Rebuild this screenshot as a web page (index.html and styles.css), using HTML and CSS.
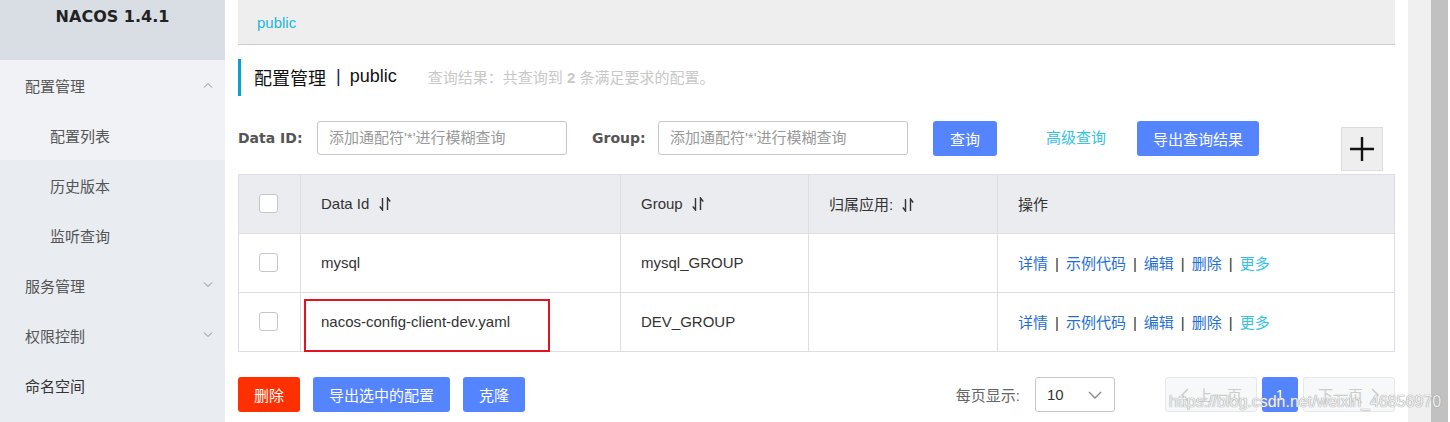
FILE: index.html
```html
<!DOCTYPE html>
<html lang="zh-CN">
<head>
<meta charset="utf-8">
<title>NACOS</title>
<link rel="stylesheet" href="styles.css">
</head>
<body>
<div class="app">
  <aside class="sidebar">
    <div class="brand">NACOS 1.4.1</div>
    <div class="menu">
      <div class="menu-item open">配置管理
        <svg class="chev" width="10" height="6" viewBox="0 0 10 6"><path d="M1 5.5 L5 1.5 L9 5.5" fill="none" stroke="#888" stroke-width="1"/></svg>
      </div>
      <div class="menu-sub active">配置列表</div>
      <div class="menu-sub">历史版本</div>
      <div class="menu-sub">监听查询</div>
      <div class="menu-item">服务管理
        <svg class="chev" width="10" height="6" viewBox="0 0 10 6"><path d="M1 0.5 L5 4.5 L9 0.5" fill="none" stroke="#888" stroke-width="1"/></svg>
      </div>
      <div class="menu-item">权限控制
        <svg class="chev" width="10" height="6" viewBox="0 0 10 6"><path d="M1 0.5 L5 4.5 L9 0.5" fill="none" stroke="#888" stroke-width="1"/></svg>
      </div>
      <div class="menu-item dark">命名空间</div>
    </div>
  </aside>

  <main class="main">
    <div class="ns-bar"><span class="ns-link">public</span></div>

    <div class="page-title">
      <span class="title-text">配置管理</span><span class="title-sep">|</span><span class="title-text">public</span>
      <span class="title-info">查询结果：共查询到 <b>2</b> 条满足要求的配置。</span>
    </div>

    <div class="search-row">
      <label class="field-label">Data ID:</label>
      <div class="input">添加通配符'*'进行模糊查询</div>
      <label class="field-label group-label">Group:</label>
      <div class="input">添加通配符'*'进行模糊查询</div>
      <button class="btn btn-primary btn-query">查询</button>
      <span class="adv-link">高级查询</span>
      <button class="btn btn-primary">导出查询结果</button>
      <div class="plus-box">
        <svg width="26" height="26" viewBox="0 0 26 26"><path d="M13 1 V25 M1 13 H25" stroke="#111" stroke-width="2.4"/></svg>
      </div>
    </div>

    <table class="grid">
      <colgroup>
        <col class="c-check"><col class="c-id"><col class="c-group"><col class="c-app"><col class="c-op">
      </colgroup>
      <thead>
        <tr>
          <th><span class="checkbox"></span></th>
          <th>Data Id <svg class="sort" width="12" height="14" viewBox="0 0 12 14"><path d="M3.5 1 V13 L0.8 9.5 M8.5 13 V1 L11.2 4.5" fill="none" stroke="#333" stroke-width="1.4"/></svg></th>
          <th>Group <svg class="sort" width="12" height="14" viewBox="0 0 12 14"><path d="M3.5 1 V13 L0.8 9.5 M8.5 13 V1 L11.2 4.5" fill="none" stroke="#333" stroke-width="1.4"/></svg></th>
          <th>归属应用: <svg class="sort" width="12" height="14" viewBox="0 0 12 14"><path d="M3.5 1 V13 L0.8 9.5 M8.5 13 V1 L11.2 4.5" fill="none" stroke="#333" stroke-width="1.4"/></svg></th>
          <th>操作</th>
        </tr>
      </thead>
      <tbody>
        <tr>
          <td><span class="checkbox"></span></td>
          <td>mysql</td>
          <td>mysql_GROUP</td>
          <td></td>
          <td class="ops"><a>详情</a><i>|</i><a>示例代码</a><i>|</i><a>编辑</a><i>|</i><a>删除</a><i>|</i><a class="more">更多</a></td>
        </tr>
        <tr>
          <td><span class="checkbox"></span></td>
          <td class="marked">nacos-config-client-dev.yaml<span class="mark-box"></span></td>
          <td>DEV_GROUP</td>
          <td></td>
          <td class="ops"><a>详情</a><i>|</i><a>示例代码</a><i>|</i><a>编辑</a><i>|</i><a>删除</a><i>|</i><a class="more">更多</a></td>
        </tr>
      </tbody>
    </table>

    <div class="footer-row">
      <button class="btn btn-danger">删除</button>
      <button class="btn btn-primary">导出选中的配置</button>
      <button class="btn btn-primary">克隆</button>
      <span class="spacer"></span>
      <span class="page-size-label">每页显示:</span>
      <div class="select">10
        <svg width="14" height="8" viewBox="0 0 14 8"><path d="M1 1 L7 7 L13 1" fill="none" stroke="#888" stroke-width="1.3"/></svg>
      </div>
      <div class="pager">
        <span class="page-btn disabled"><svg width="9" height="14" viewBox="0 0 9 14"><path d="M8 1 L2 7 L8 13" fill="none" stroke="#ccc" stroke-width="1.5"/></svg>上一页</span>
        <span class="page-num">1</span>
        <span class="page-btn disabled">下一页<svg width="9" height="14" viewBox="0 0 9 14"><path d="M1 1 L7 7 L1 13" fill="none" stroke="#ccc" stroke-width="1.5"/></svg></span>
      </div>
    </div>
  </main>

  <div class="scrollbar"><div class="track"></div><div class="thumb"></div></div>
</div>
<div class="watermark">https://blog.csdn.net/weixin_46856970</div>
</body>
</html>
```
FILE: styles.css
```css
* { box-sizing: border-box; }
html, body { margin: 0; padding: 0; }
body {
  width: 1450px;
  height: 422px;
  overflow: hidden;
  font-family: "Liberation Sans", "Noto Sans CJK SC", sans-serif;
  font-size: 15px;
  color: #333;
  background: #fff;
  position: relative;
}
.app { display: flex; height: 422px; }

/* sidebar */
.sidebar { width: 225px; flex: none; background: #e9ecf1; }
.brand {
  height: 60px;
  background: #d9dde4;
  font-family: "DejaVu Sans", sans-serif;
  font-weight: bold;
  font-size: 16px;
  color: #222;
  text-align: center;
  line-height: 34px;
}
.menu-item, .menu-sub {
  height: 50px;
  display: flex;
  align-items: center;
  padding-left: 25px;
  padding-right: 12px;
  color: #555;
  font-size: 15px;
}
.menu-sub { padding-left: 50px; }
.menu-item.open, .menu-sub.active { background: #f0f2f5; }
.menu-item .chev { margin-left: auto; }
.menu-item.dark { color: #333; }

/* main */
.main { width: 1183px; flex: none; padding: 0 13px; }
.ns-bar {
  height: 45px;
  background: #eee;
  border-bottom: 1px solid #ccc;
  padding-left: 19px;
  display: flex;
  align-items: center;
}
.ns-link { color: #1fb6e0; font-size: 15px; }

.page-title {
  margin-top: 14px;
  height: 37px;
  border-left: 3px solid #09a0d6;
  padding-left: 13px;
  padding-bottom: 2px;
  display: flex;
  align-items: center;
}
.title-text { font-size: 18px; color: #111; }
.title-sep { font-size: 18px; color: #0f1f6b; margin: 0 9px 0 10px; }
.title-info { margin-left: 31px; font-size: 15px; color: #c8c8c8; }
.title-info b { font-weight: bold; }

.search-row {
  margin-top: 25px;
  display: flex;
  align-items: flex-start;
}
.field-label {
  font-family: "DejaVu Sans", sans-serif;
  font-weight: bold;
  font-size: 14px;
  color: #555;
  line-height: 34px;
  width: 79px;
}
.group-label { width: 66px; margin-left: 25px; }
.input {
  width: 250px;
  height: 34px;
  border: 1px solid #c4c6cf;
  border-radius: 3px;
  padding-left: 11px;
  line-height: 32px;
  color: #999;
  font-size: 15px;
}
.btn {
  height: 35px;
  border: none;
  border-radius: 3px;
  padding: 0 16px;
  color: #fff;
  font-family: "Liberation Sans", "Noto Sans CJK SC", sans-serif;
  font-size: 15px;
}
.btn-primary { background: #5584ff; }
.btn-danger { background: #ff3000; }
.btn-query { margin-left: 25px; padding: 0 17px; }
.adv-link { color: #33c3e5; line-height: 34px; margin: 0 31px 0 49px; }
.plus-box {
  margin-left: auto;
  margin-right: 12px;
  margin-top: 6px;
  width: 42px;
  height: 44px;
  background: #eee;
  border: 1px solid #ddd;
  display: flex;
  align-items: center;
  justify-content: center;
}

/* table */
.grid {
  margin-top: 3px;
  width: 1156px;
  border-collapse: collapse;
  table-layout: fixed;
}
.c-check { width: 62px; }
.c-id { width: 320px; }
.c-group { width: 188px; }
.c-app { width: 189px; }
.c-op { width: 397px; }
.grid th, .grid td {
  border: 1px solid #dcdee3;
  height: 59px;
  padding: 0 0 2px 20px;
  text-align: left;
  font-weight: normal;
  font-size: 15px;
  color: #333;
  vertical-align: middle;
}
.grid th { background: #ebecf0; }
.grid th .sort { vertical-align: -2px; margin-left: 5px; }
.checkbox {
  display: block;
  width: 19px;
  height: 19px;
  border: 1px solid #c4c6cf;
  border-radius: 3px;
  background: #fff;
}
.marked { position: relative; }
.mark-box {
  position: absolute;
  left: 3px;
  top: 6px;
  width: 246px;
  height: 53px;
  border: 2px solid #e5121f;
}
.ops a { color: #1f6fd6; }
.ops a.more { color: #38c1e8; }
.ops i { font-style: normal; color: #333; margin: 0 7px; }

/* footer */
.footer-row {
  margin-top: 25px;
  display: flex;
  align-items: center;
  gap: 13px;
}
.spacer { flex: 1; }
.page-size-label { color: #666; font-size: 15px; margin-right: 2px; }
.select {
  width: 80px;
  height: 35px;
  border: 1px solid #c4c6cf;
  border-radius: 3px;
  display: flex;
  align-items: center;
  justify-content: space-between;
  padding: 0 12px 0 11px;
  color: #333;
  font-size: 15px;
  margin-right: 37px;
}
.pager { display: flex; gap: 5px; }
.page-btn {
  width: 92px;
  height: 35px;
  border: 1px solid #e6e7eb;
  border-radius: 3px;
  background: #f7f8fa;
  color: #ccc;
  display: flex;
  align-items: center;
  justify-content: center;
  gap: 8px;
}
.page-num {
  width: 36px;
  height: 35px;
  border-radius: 3px;
  background: #5584ff;
  color: #fff;
  display: flex;
  align-items: center;
  justify-content: center;
}

/* fake scrollbar */
.scrollbar { display: flex; width: 40px; flex: none; }
.track { width: 23px; background: #f0f0f0; }
.thumb { width: 17px; background: #c1c1c1; }

.watermark {
  position: absolute;
  left: 1169px;
  top: 393px;
  font-family: "Liberation Sans", Arial, sans-serif;
  font-size: 16px;
  color: rgba(255,255,255,0.85);
  text-shadow: 0 0 1px #999, 0 0 1px #999;
  white-space: nowrap;
}
```
